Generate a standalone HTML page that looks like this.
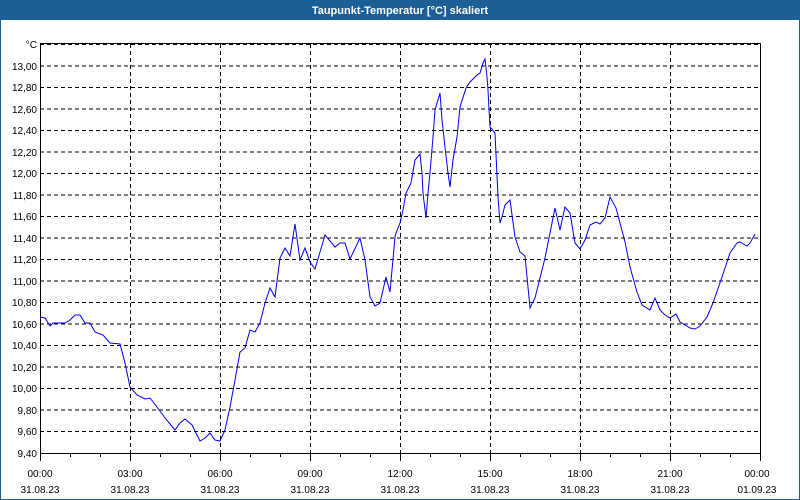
<!DOCTYPE html>
<html><head><meta charset="utf-8"><style>
html,body{margin:0;padding:0;width:800px;height:500px;overflow:hidden;background:#fff}
</style></head><body>
<svg width="800" height="500" xmlns="http://www.w3.org/2000/svg" style="display:block;font-family:'Liberation Sans',sans-serif">
<rect x="0" y="0" width="800" height="500" fill="#1c5f96"/>
<rect x="1" y="20" width="798" height="479" fill="#fff"/>
<text x="400" y="14" fill="#fff" font-size="11" font-weight="bold" text-anchor="middle">Taupunkt-Temperatur [°C] skaliert</text>
<g stroke="#000" stroke-width="1" stroke-dasharray="4,3" fill="none">
<path d="M40 44.5H760M40 66H760M40 87.5H760M40 109H760M40 130.5H760M40 152H760M40 173.5H760M40 195H760M40 216.5H760M40 238H760M40 259.5H760M40 281H760M40 302.5H760M40 324H760M40 345.5H760M40 367H760M40 388.5H760M40 410H760M40 431.5H760"/>
<path d="M130.5 44V453M220.5 44V453M310.5 44V453M400.5 44V453M490.5 44V453M580.5 44V453M670.5 44V453"/>
</g>
<rect x="40.5" y="43.5" width="720" height="410" fill="none" stroke="#000"/>
<g stroke="#000"><path d="M40.5 453v8M70.5 453v4M100.5 453v4M130.5 453v8M160.5 453v4M190.5 453v4M220.5 453v8M250.5 453v4M280.5 453v4M310.5 453v8M340.5 453v4M370.5 453v4M400.5 453v8M430.5 453v4M460.5 453v4M490.5 453v8M520.5 453v4M550.5 453v4M580.5 453v8M610.5 453v4M640.5 453v4M670.5 453v8M700.5 453v4M730.5 453v4M760.5 453v8"/></g>
<g font-size="10" fill="#000" text-anchor="end">
<text x="37" y="48">°C</text><text x="37" y="70">13,00</text><text x="37" y="91">12,80</text><text x="37" y="113">12,60</text><text x="37" y="134">12,40</text><text x="37" y="156">12,20</text><text x="37" y="177">12,00</text><text x="37" y="199">11,80</text><text x="37" y="220">11,60</text><text x="37" y="242">11,40</text><text x="37" y="263">11,20</text><text x="37" y="285">11,00</text><text x="37" y="306">10,80</text><text x="37" y="328">10,60</text><text x="37" y="349">10,40</text><text x="37" y="371">10,20</text><text x="37" y="392">10,00</text><text x="37" y="414">9,80</text><text x="37" y="435">9,60</text><text x="37" y="457">9,40</text>
</g>
<g font-size="10" fill="#000" text-anchor="middle">
<text x="40" y="477">00:00</text><text x="130" y="477">03:00</text><text x="220" y="477">06:00</text><text x="310" y="477">09:00</text><text x="400" y="477">12:00</text><text x="490" y="477">15:00</text><text x="580" y="477">18:00</text><text x="670" y="477">21:00</text><text x="757" y="477">00:00</text>
<text x="40" y="493">31.08.23</text><text x="130" y="493">31.08.23</text><text x="220" y="493">31.08.23</text><text x="310" y="493">31.08.23</text><text x="400" y="493">31.08.23</text><text x="490" y="493">31.08.23</text><text x="580" y="493">31.08.23</text><text x="670" y="493">31.08.23</text><text x="757" y="493">01.09.23</text>
</g>
<polyline fill="none" stroke="#0000ee" stroke-width="1" points="40,317 45,318 50,326 53,323 65,323 70,320 75,315 80,315 85,323 90,323 95,332 103,335 110,343 120,344 125,363 130,387 137,395 145,399 150,398 157,407 165,418 175,430 180,423 185,419 192,425 200,441 205,438 210,433 215,440 220,441 225,430 230,407 235,380 240,352 245,348 250,330 255,332 260,323 265,303 270,288 275,297 280,258 285,248 290,256 295,224 300,260 305,248 310,262 315,269 325,235 335,247 340,243 345,243 350,259 360,238 365,260 370,297 375,306 380,303 386,277 390,292 395,237 396,233 400,223 403,210 406,193 411,183 415,160 420,154 422,173 423,193 426,218 428,193 430,173 433,137 435,110 440,93 442,120 445,147 448,173 450,187 453,160 457,137 460,107 466,88 470,82 477,75 480,73 483,63 485,59 487,77 488,90 490,127 495,133 498,197 500,223 502,217 505,205 510,200 515,237 520,252 525,256 530,308 535,298 540,278 545,258 550,233 555,208 560,230 565,207 570,213 575,243 580,249 585,240 590,225 596,222 600,224 605,218 610,197 616,208 625,242 630,267 637,292 642,305 650,310 655,298 660,310 665,315 670,318 676,314 680,322 690,328 695,329 700,326 707,317 713,303 722,277 730,253 737,243 740,242 747,246 750,243 755,234"/>
</svg>
</body></html>
